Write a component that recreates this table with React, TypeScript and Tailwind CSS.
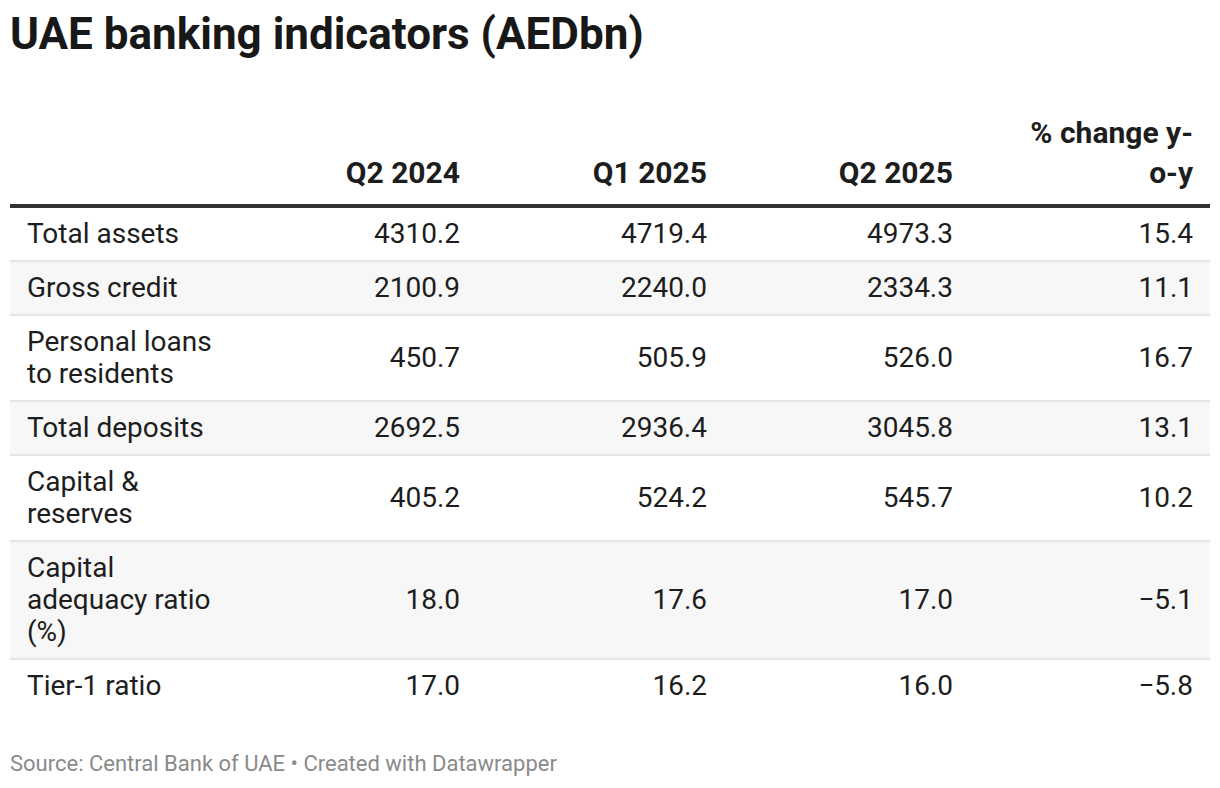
import React from 'react';

type Row = {
  label: React.ReactNode;
  values: string[];
};

const rows: Row[] = [
  { label: 'Total assets', values: ['4310.2', '4719.4', '4973.3', '15.4'] },
  { label: 'Gross credit', values: ['2100.9', '2240.0', '2334.3', '11.1'] },
  {
    label: (
      <>
        Personal loans
        <br />
        to residents
      </>
    ),
    values: ['450.7', '505.9', '526.0', '16.7'],
  },
  { label: 'Total deposits', values: ['2692.5', '2936.4', '3045.8', '13.1'] },
  {
    label: (
      <>
        Capital &amp;
        <br />
        reserves
      </>
    ),
    values: ['405.2', '524.2', '545.7', '10.2'],
  },
  {
    label: (
      <>
        Capital
        <br />
        adequacy ratio
        <br />
        (%)
      </>
    ),
    values: ['18.0', '17.6', '17.0', '\u22125.1'],
  },
  { label: 'Tier-1 ratio', values: ['17.0', '16.2', '16.0', '\u22125.8'] },
];

const colWidths = ['w-[242px] pr-[12px]', 'w-[246px] pr-[11px]', 'w-[246px] pr-[11px]', 'w-[246px] pr-[17px]'];

export default function App() {
  return (
    <div className="min-h-[788px] w-[1220px] bg-white px-[10px] pt-[8px] text-[#1d1d1d] font-['Roboto',sans-serif]">
      {/* Title */}
      <h1 className="text-[44px] font-bold leading-[52px] text-[#181818]">UAE banking indicators (AEDbn)</h1>

      {/* Table */}
      <div className="mt-[53px] w-[1200px]">
        {/* Header */}
        <div className="flex items-end border-b-[4px] border-[#333333] pb-[11px] text-[30px] font-bold leading-[40px]">
          <div className="w-[220px]" />
          <div className={`${colWidths[0]} text-right`}>Q2 2024</div>
          <div className={`${colWidths[1]} text-right`}>Q1 2025</div>
          <div className={`${colWidths[2]} text-right`}>Q2 2025</div>
          <div className={`${colWidths[3]} text-right`}>
            % change y-
            <br />
            o-y
          </div>
        </div>

        {/* Body */}
        {rows.map((row, i) => (
          <div
            key={i}
            className={`flex items-center text-[28px] leading-[32px] ${
              i < rows.length - 1 ? 'border-b-2 border-[#e6e6e6]' : ''
            } ${i % 2 === 1 ? 'bg-[#f7f7f7]' : 'bg-white'}`}
          >
            <div className="w-[220px] py-[10px] pl-[17px]">{row.label}</div>
            {row.values.map((v, j) => (
              <div key={j} className={`${colWidths[j]} text-right tabular-nums`}>
                {v}
              </div>
            ))}
          </div>
        ))}
      </div>

      {/* Footer */}
      <p className="mt-[39px] text-[22px] leading-[26px] text-[#8a8a8a]">
        Source: Central Bank of UAE • Created with Datawrapper
      </p>
    </div>
  );
}
